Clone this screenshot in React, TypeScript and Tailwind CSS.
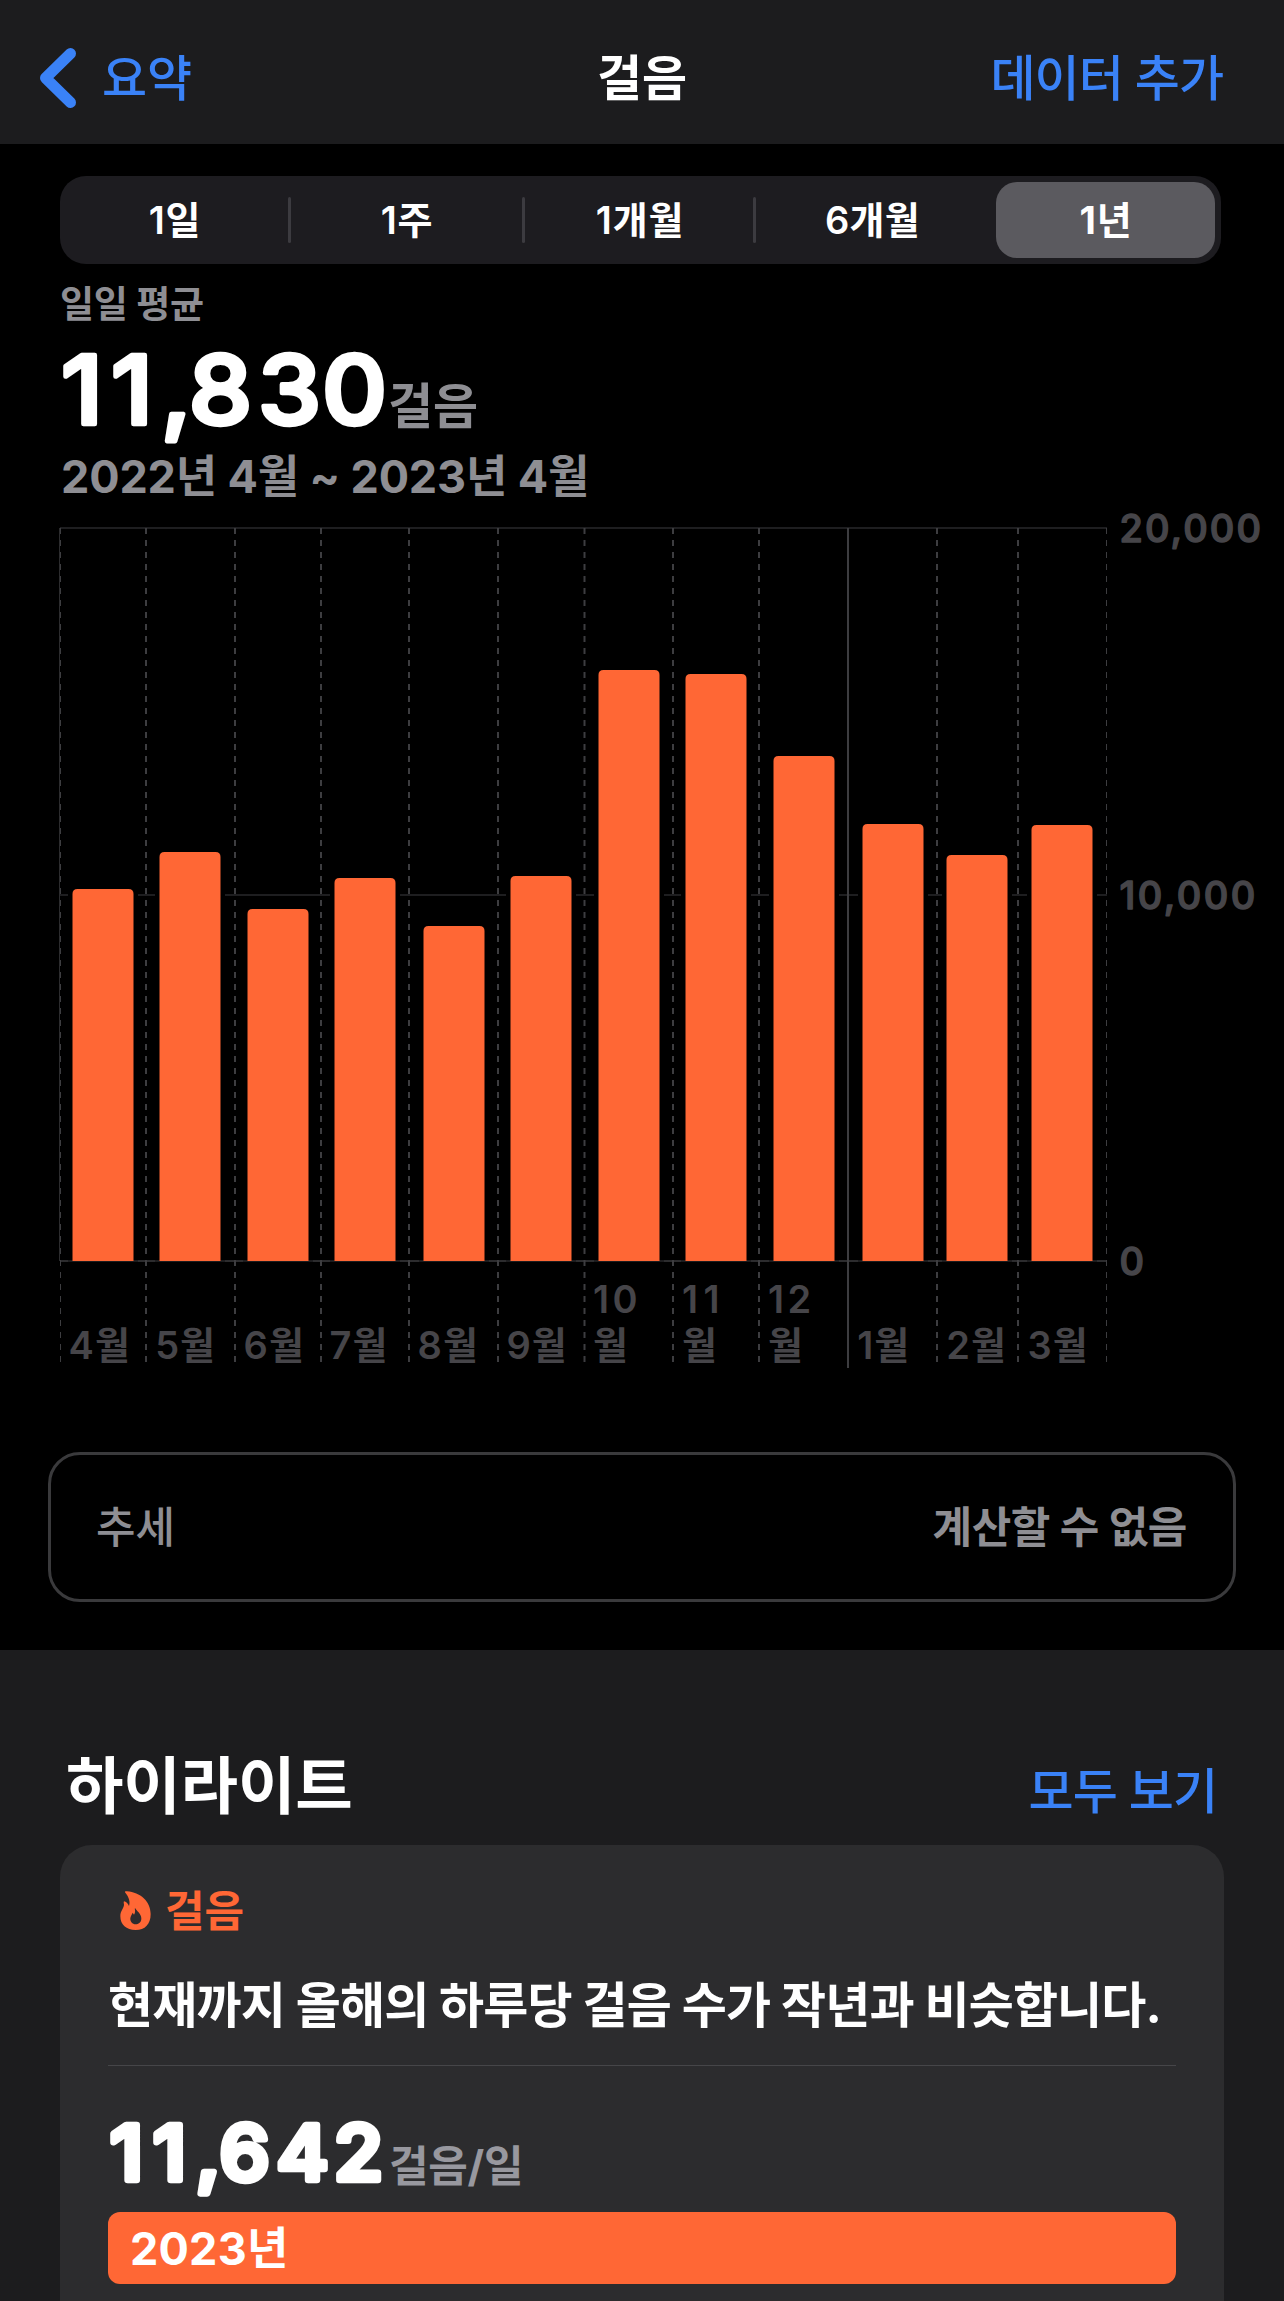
import React from "react";

type Month = { label: string; x: number; top: number; labelX: number; wrap?: string; gap?: number };

const months: Month[] = [
  { label: "4", x: 72.5, top: 889, labelX: 68.6 },
  { label: "5", x: 159.5, top: 852, labelX: 155.2 },
  { label: "6", x: 247.5, top: 909, labelX: 243.6 },
  { label: "7", x: 334.5, top: 878, labelX: 329.6 },
  { label: "8", x: 423.5, top: 926, labelX: 417.6 },
  { label: "9", x: 510.5, top: 876, labelX: 506.4 },
  { label: "10", x: 598.5, top: 670, labelX: 592.9, wrap: "월", gap: 3.5 },
  { label: "11", x: 685.5, top: 674, labelX: 682, wrap: "월", gap: 5.5 },
  { label: "12", x: 773.5, top: 756, labelX: 768, wrap: "월", gap: 3.5 },
  { label: "1", x: 862.5, top: 824, labelX: 857.2 },
  { label: "2", x: 946.5, top: 855, labelX: 946.2 },
  { label: "3", x: 1031.5, top: 825, labelX: 1027.6 },
];

const dashed = [146, 235, 321, 409, 498, 584.5, 673, 759, 937, 1018];

type RoundedNumberProps = { text: string; x: number[]; y: number; stretch: number; stroke: number; className: string };

// Large numerals with softened corners: a thin round-joined outline around each digit.
function RoundedNumber({ text, x, y, stretch, stroke, className }: RoundedNumberProps) {
  return (
    <svg className={className} fill="#fff" stroke="#fff" strokeWidth={stroke} strokeLinejoin="round">
      <text x={x.map((v) => (v / stretch).toFixed(2)).join(" ")} y={y} transform={`scale(${stretch} 1)`}>
        {text}
      </text>
    </svg>
  );
}

function Flame() {
  return (
    <svg viewBox="30 32 91 117" className="-mt-[2px] ml-[12px] h-[39px] w-[31px]" fill="#ff6735" fillRule="evenodd">
      <path d="M44 36C43 33 46 32 50 33C90 36 121 63 121 101C121 132 104 149 76 149C48 149 30 133 30 108C30 92 39 86 41 74C41 70 39 66 41 63C47 64 53 70 56 77C60 66 57 52 44 36ZM75 84C78 92 94 100 93 116C92 127 84 132 76 132C66 132 59 124 60 114C61 106 65 102 67 97L71 103C75 97 75 90 73 85Z" />
    </svg>
  );
}

function Chart() {
  return (
    <svg viewBox="0 504 1284 876" className="-ml-[60px] block h-[876px] w-[1284px]">
      <rect x="60" y="527" width="1047" height="2" fill="#1e1e20" />
      <rect x="60" y="894" width="1047" height="2" fill="#1e1e20" />
      <rect x="59" y="528" width="1" height="733" fill="#2c2c2e" />
      <rect x="60" y="1260" width="1047" height="2" fill="#2c2c2e" />
      {months.map((m) => (
        <rect key={m.label} x={m.x - 4.5} y={m.top - 4.5} width="70" height={1260 - m.top + 4.5} fill="#000" />
      ))}
      {months.map((m) => (
        <rect key={m.label} x={m.x - 4.5} y="1260" width="70" height="2" fill="#1c1c1e" />
      ))}
      {dashed.map((x) => (
        <line key={x} x1={x} x2={x} y1="528" y2="1363" stroke="#3d3d40" strokeWidth="2" strokeDasharray="6 6" />
      ))}
      <line x1="60.5" x2="60.5" y1="528" y2="1363" stroke="#3d3d40" strokeDasharray="6 6" />
      <line x1="1106.5" x2="1106.5" y1="528" y2="1363" stroke="#3d3d40" strokeDasharray="6 6" />
      <line x1="848" x2="848" y1="528" y2="1368" stroke="#3d3d40" strokeWidth="2" />
      {months.map((m) => (
        <path
          key={m.label}
          d={`M${m.x} 1261V${m.top + 5}q0 -5 5 -5h51q5 0 5 5V1261Z`}
          fill="#ff6735"
        />
      ))}
      <g fill="#464549" stroke="#464549" strokeWidth="1.4" strokeLinejoin="round" className="text-[38px] font-medium">
        <text x="1119.5" y="542" className="tracking-[2.1px]">20,000</text>
        <text x="1119.5" y="909" className="tracking-[2.5px]">10,000</text>
        <text x="1119.5" y="1275">0</text>
      </g>
      <g fill="#464549" className="text-[38px] font-semibold">
        {months.map((m) =>
          m.wrap ? (
            <g key={m.label}>
              <text x={m.labelX} y="1313" style={{ letterSpacing: m.gap }}>{m.label}</text>
              <text x={m.labelX} y="1359">{m.wrap}</text>
            </g>
          ) : (
            <text key={m.label} x={m.labelX} y="1359" className="tracking-[1px]">{m.label}월</text>
          ),
        )}
      </g>
    </svg>
  );
}

function Divider() {
  return <div className="h-[46px] w-[3px] rounded-full bg-[#3c3b40]" />;
}

function SegmentedControl() {
  return (
    <div className="flex h-[88px] w-[1161px] items-center rounded-[26px] bg-[#1d1c20] text-center text-[38px] leading-[60px] font-semibold tracking-[0.8px] text-white">
      <div className="w-[228px] pl-[2px]">1일</div>
      <Divider />
      <div className="w-[231px] pl-[1px]">1주</div>
      <Divider />
      <div className="w-[228px] pl-[2px]">1개월</div>
      <Divider />
      <div className="w-[231px] pl-[2px] tracking-[0.3px]">6개월</div>
      <div className="ml-[9px] flex h-[76px] w-[219px] items-center justify-center rounded-[21px] bg-[#5b5a5f] pl-[1px] font-bold">1년</div>
    </div>
  );
}

export default function App() {
  return (
    <div className="h-[2301px] w-[1284px] overflow-hidden bg-black font-['Inter','Noto_Sans_CJK_KR',sans-serif] whitespace-nowrap">
      <header className="grid h-[144px] grid-cols-[1fr_auto_1fr] items-center bg-[#1c1c1e] pt-[14px] pr-[61px] pl-[40px] text-[49px] leading-[60px]">
        <div className="flex items-center font-medium text-[#3a82f7]">
          <svg viewBox="0 0 36 60" className="-mt-[2px] h-[60px] w-[36px]" fill="none" stroke="#3a82f7" strokeWidth="11" strokeLinecap="round" strokeLinejoin="round">
            <path d="M30.5 5.5L5.5 30L30.5 54.5" />
          </svg>
          <span className="ml-[26px]">요약</span>
        </div>
        <h1 className="ml-[21px] font-bold text-white">걸음</h1>
        <div className="text-right font-medium tracking-[-1px] text-[#3a82f7]">데이터 추가</div>
      </header>

      <main className="h-[1506px] px-[60px] pt-[32px]">
        <SegmentedControl />
        <div className="mt-[19px] text-[37px] leading-[44px] font-bold tracking-[-0.2px] text-[#8e8e93]">일일 평균</div>
        <div className="mt-[15px] flex h-[102px] items-start">
          <RoundedNumber
            text="11,830"
            x={[1, 51, 101, 128.8, 198, 262]}
            y={82}
            stroke={4.5}
            stretch={1.06}
            className="h-[102px] w-[328px] shrink-0 overflow-visible text-[95px] font-medium"
          />
          <span className="mt-[35px] text-[49px] leading-[60px] font-bold text-[#8e8e93]">걸음</span>
        </div>
        <div className="mt-[6px] ml-[1px] text-[45px] leading-[54px] font-bold tracking-[-0.15px] text-[#8e8e93]">2022년 4월 ~ 2023년 4월</div>
        <Chart />
        <div className="-mx-[12px] mt-[72px] flex h-[150px] items-center justify-between rounded-[32px] border-3 border-[#3a3a3c] pr-[46px] pl-[45px] text-[43px] leading-[60px] text-[#8e8e93]">
          <span className="font-medium">추세</span>
          <span className="font-bold tracking-[-0.4px]">계산할 수 없음</span>
        </div>
      </main>

      <section className="h-[651px] bg-[#1c1c1e] pt-[96px]">
        <div className="flex h-[80px] items-baseline justify-between pr-[67px] pl-[66px]">
          <h2 className="text-[62.5px] leading-[80px] font-bold tracking-[-0.2px] text-white">하이라이트</h2>
          <span className="text-[49px] leading-[60px] font-medium tracking-[-1px] text-[#3a82f7]">모두 보기</span>
        </div>
        <div className="mx-[60px] mt-[19px] h-[456px] rounded-t-[32px] bg-[#2c2c2e] px-[48px] pt-[38px]">
          <div className="flex h-[56px] items-center gap-[14px] text-[43px] leading-[56px] font-bold text-[#ff6735]">
            <Flame />
            <span>걸음</span>
          </div>
          <p className="mt-[35px] text-[49px] leading-[64px] font-bold tracking-[-0.85px] text-white">
            현재까지 올해의 하루당 걸음 수가 작년과 비슷합니다.
          </p>
          <div className="mt-[27px] h-px bg-[#464649]" />
          <div className="mt-[44px] flex h-[92px] items-start">
            <RoundedNumber
              text="11,642"
              x={[2, 45, 88, 111.5, 168.5, 226]}
              y={70}
              stroke={6.5}
              stretch={1.06}
              className="h-[92px] w-[281px] shrink-0 overflow-visible text-[75px] font-medium"
            />
            <span className="mt-[28px] text-[43px] leading-[56px] font-bold tracking-[-0.3px] text-[#98989f]">걸음/일</span>
          </div>
          <div className="mt-[10px] flex h-[72px] items-center rounded-[12px] bg-[#ff6735] pt-[2px] pl-[22px] text-[45px] leading-[60px] font-bold tracking-[0.2px] text-white">
            2023년
          </div>
        </div>
      </section>
    </div>
  );
}
